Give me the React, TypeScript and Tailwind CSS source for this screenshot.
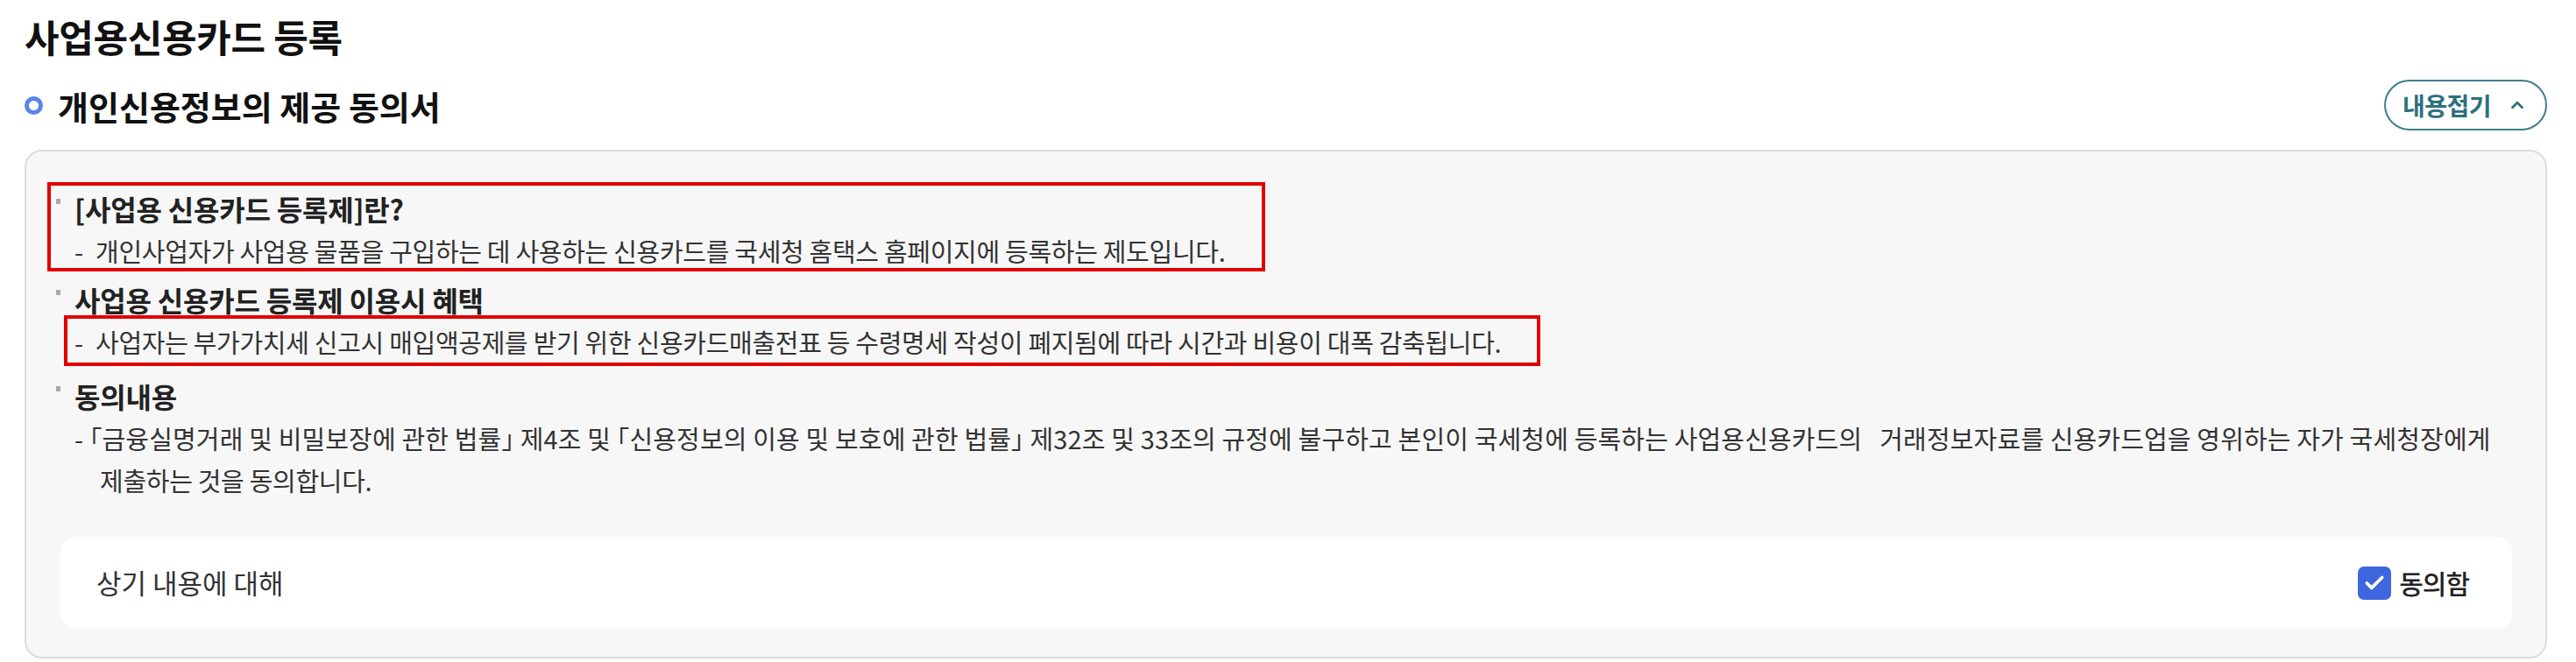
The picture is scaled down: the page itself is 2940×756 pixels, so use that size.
import React from "react";
import { Check, ChevronUp } from "lucide-react";

const font = { fontFamily: '"Noto Sans CJK KR", "Noto Sans", sans-serif' };

function Heading({ children }: { children: React.ReactNode }) {
  return (
    <div className="flex items-start h-[48px] leading-[48px]">
      <span className="mt-[13px] w-[5px] h-[6px] bg-[#ababab] shrink-0" />
      <span className="ml-[16px] text-[32px] font-bold text-[#222] tracking-[-0.2px]">{children}</span>
    </div>
  );
}

function Body({ children }: { children: React.ReactNode }) {
  return (
    <div className="relative flex pl-[21px] text-[29px] leading-[48px] text-[#333] tracking-[-0.3px]">
      <span className="w-[24px] shrink-0">-</span>
      <span>{children}</span>
    </div>
  );
}

function Br({ c }: { c: string }) {
  return <span className="[font-feature-settings:'halt']">{c}</span>;
}

export default function App() {
  return (
    <div className="w-full h-[756px] bg-white pl-[28px] pr-[33px] pt-[17px]" style={font}>
      <h1 className="text-[43px] leading-[48px] font-bold text-[#111] tracking-[-0.3px]">사업용신용카드 등록</h1>

      <div className="mt-[26px] flex items-center justify-between h-[58px]">
        <div className="flex items-center">
          <span className="w-[21px] h-[21px] rounded-full border-[5px] border-[#5a84e6]" />
          <span className="ml-[17px] text-[38px] font-bold text-[#111]">개인신용정보의 제공 동의서</span>
        </div>
        <button className="h-[58px] w-[186px] rounded-full border-2 border-[#3f7f8c] flex items-center pl-[19px] pr-[21px] justify-between text-[#2f6f7e]">
          <span className="text-[28px] font-semibold tracking-[-0.5px]">내용접기</span>
          <ChevronUp size={22} strokeWidth={3} />
        </button>
      </div>

      <div className="mt-[22px] h-[581px] rounded-[20px] border-2 border-[#dcdcdc] bg-[#f7f7f7] pt-[41px]">
        <div className="px-[34px]">
          <div className="relative">
            <div className="absolute left-[-10px] top-[-6px] w-[1390px] h-[102px] border-4 border-[#e20000] pointer-events-none" />
            <Heading>[사업용 신용카드 등록제]란?</Heading>
            <Body>개인사업자가 사업용 물품을 구입하는 데 사용하는 신용카드를 국세청 홈택스 홈페이지에 등록하는 제도입니다.</Body>
          </div>

          <div className="mt-[8px]">
            <Heading>사업용 신용카드 등록제 이용시 혜택</Heading>
            <div className="relative">
              <div className="absolute left-[9px] top-[-6px] w-[1685px] h-[58px] border-4 border-[#e20000] pointer-events-none" />
              <Body>사업자는 부가가치세 신고시 매입액공제를 받기 위한 신용카드매출전표 등 수령명세 작성이 폐지됨에 따라 시간과 비용이 대폭 감축됩니다.</Body>
            </div>
          </div>

          <div className="mt-[14px]">
            <Heading>동의내용</Heading>
            <p className="pl-[50px] -indent-[29px] text-[29px] leading-[48px] text-[#333] tracking-[-0.3px]">
              <span className="tracking-[0.15px]">
                -{"\u00a0"}<Br c="「" />금융실명거래 및 비밀보장에 관한 법률<Br c="」" /> 제4조 및 <Br c="「" />신용정보의 이용 및 보호에 관한 법률<Br c="」" /> 제32조 및 33조의 규정에 불구하고 본인이 국세청에 등록하는 사업용신용카드의{"\u00a0\u00a0\u00a0"}거래정보자료를 신용카드업을 영위하는 자가 국세청장에게
              </span>
              <br />
              제출하는 것을 동의합니다.
            </p>
          </div>
        </div>

        <div className="mt-[41px] ml-[39px] mr-[38px] h-[105px] rounded-[18px] bg-white flex items-center justify-between pl-[41px] pr-[49px]">
          <span className="text-[31px] text-[#333]">상기 내용에 대해</span>
          <label className="flex items-center">
            <span className="w-[38px] h-[38px] rounded-[7px] bg-[#3e66df] flex items-center justify-center">
              <Check size={26} strokeWidth={3.5} color="#ffffff" />
            </span>
            <span className="ml-[9px] text-[30px] font-medium text-[#222] tracking-[-1px]">동의함</span>
          </label>
        </div>
      </div>
    </div>
  );
}
